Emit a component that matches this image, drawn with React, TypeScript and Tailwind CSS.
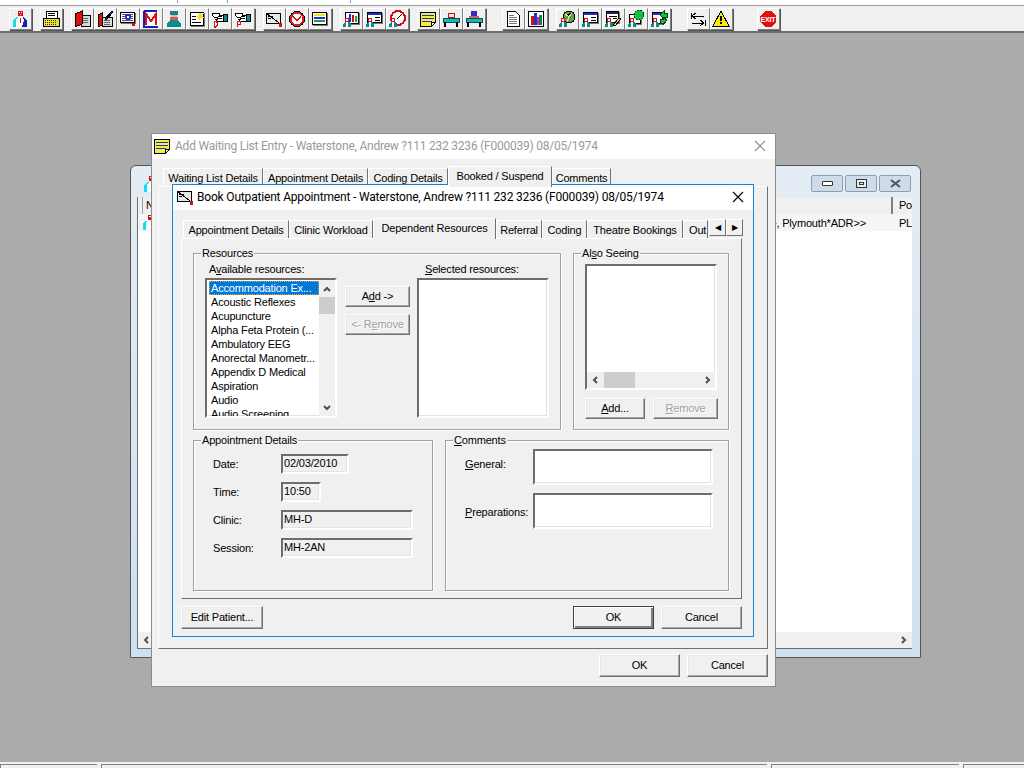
import React from "react";

const face = "font-['Liberation_Sans',Arial,sans-serif]";

// little figure that most of the patient toolbar icons share
function Mini({ x = 0, y = 0 }: { x?: number; y?: number }) {
  return (
    <g transform={`translate(${x} ${y})`}>
      <rect x="3" y="0" width="4" height="4" fill="#d81010" />
      <rect x="4" y="1" width="2" height="2" fill="#ffffff" />
      <path d="M1 9V6L3 4H7L9 6V9Z" fill="#0d8a8a" />
      <path d="M4 4H6V9H4Z" fill="#ffffff" />
    </g>
  );
}

function Sheet({ x, y, w, h }: { x: number; y: number; w: number; h: number }) {
  return (
    <>
      <rect x={x + 1} y={y + 1} width={w} height={h} fill="#777777" />
      <rect x={x + 0.5} y={y + 0.5} width={w - 1} height={h - 1} fill="#ffffff" stroke="#000000" />
    </>
  );
}

function Hand({ children }: { children: React.ReactNode }) {
  return (
    <>
      <path d="M1 3H8V5H10L12 6V11H6L4 9H6V7H3L1 5Z" fill="#fff" stroke="#000" />
      <path d="M7 6H11M7 8H11" stroke="#000" />
      <rect x="12.500" y="4.500" width="4" height="7" fill="#0d8a8a" stroke="#000" />
      {children}
    </>
  );
}

const icons: React.ReactNode[] = [
  <>
    <rect x="7" y="1" width="5" height="5" fill="#d81010" />
    <rect x="8" y="2" width="1" height="1" fill="#fff" />
    <rect x="10" y="2" width="1" height="1" fill="#fff" />
    <rect x="9" y="4" width="1" height="1" fill="#fff" />
    <path d="M5 17V10L7 7H12L15 10V17Z" fill="#ffffff" />
    <path d="M12 7L16 10V17H11L13 11Z" fill="#1020b0" />
    <path d="M2 17V10L6 7H7L5 10V17Z" fill="#10e0f0" />
    <rect x="9" y="8" width="1" height="5" fill="#d81010" />
  </>,
  <>
    <rect x="4" y="1" width="11" height="7" fill="#fff" stroke="#000" />
    <path d="M6 3H13M6 5H13" stroke="#000" />
    <rect x="1" y="8" width="16" height="8" fill="#e8e040" stroke="#000" />
    <path d="M3 10H15M3 12H15M3 14H15" stroke="#403000" strokeDasharray="1 1" />
  </>,
  <>
    <rect x="8" y="5" width="9" height="11" fill="#d8d8d8" stroke="#000" />
    <path d="M10 8H15M10 10H15M10 12H15" stroke="#666" />
    <path d="M2 4L9 1V14L2 17Z" fill="#e01010" stroke="#000" />
  </>,
  <>
    <rect x="6" y="7" width="10" height="9" fill="#d8d8d8" stroke="#000" />
    <path d="M8 10H14M8 12H14M8 14H14" stroke="#666" />
    <path d="M2 5L6 3V15L2 17Z" fill="#e01010" stroke="#000" />
    <path d="M9 9L16 1L17 2L10 10Z" fill="#2040c0" stroke="#000" />
  </>,
  <>
    <Sheet x={1} y={2} w={15} h={11} />
    <path d="M3 4H14M3 6H6M12 6H14M3 8H6M12 8H14M3 10H14" stroke="#555" />
    <circle cx="9" cy="7" r="3" fill="#2030d0" />
    <circle cx="9" cy="7" r="1" fill="#fff" />
    <path d="M13 13H16V16H13Z" fill="#d81010" />
  </>,
  <>
    <rect x="1" y="1" width="16" height="16" fill="#fff" />
    <path d="M2 1V17H16M2 1H15" fill="none" stroke="#1020c0" strokeWidth="2" />
    <path d="M4 15V4L9 11L14 4V15" fill="none" stroke="#e01010" strokeWidth="2" />
  </>,
  <>
    <rect x="5" y="1" width="8" height="4" fill="#0d8a8a" />
    <rect x="6" y="5" width="6" height="3" fill="#f0b090" />
    <rect x="5" y="7" width="8" height="3" fill="#d06060" />
    <path d="M2 17V13L6 10H12L16 13V17Z" fill="#0d8a8a" />
  </>,
  <>
    <Sheet x={2} y={2} w={14} h={14} />
    <path d="M4 6H8M4 9H8M4 12H13" stroke="#000" />
    <path d="M12 1L13 4L16 3L14 6L17 8L13 8L12 11L10 8L8 6L11 5Z" fill="#f0e020" />
  </>,
  <Hand>
    <path d="M3 11V17H4.500L6 15.500V12.500L4.500 11Z" fill="#fff" stroke="#e01010" />
  </Hand>,
  <Hand>
    <path d="M3 17V11H6V14H3" fill="none" stroke="#e01010" />
  </Hand>,
  <>
    <path d="M1 3H15V13H1Z" fill="#e8e8e8" stroke="#000" />
    <path d="M1 3L14 13M3 6H8M3 8H6" stroke="#000" />
    <path d="M14 13H17V17H14Z" fill="#d81010" />
  </>,
  <>
    <circle cx="9" cy="9" r="7.500" fill="#e02020" stroke="#000" />
    <circle cx="9" cy="9" r="5.500" fill="#fff" />
    <path d="M4 6L9 10L13 7" fill="none" stroke="#d01010" strokeWidth="1.500" />
  </>,
  <>
    <Sheet x={1} y={2} w={15} h={13} />
    <rect x="3" y="4" width="11" height="2" fill="#f0e020" />
    <rect x="3" y="7" width="11" height="2" fill="#2030d0" />
    <rect x="3" y="10" width="11" height="2" fill="#20a040" />
  </>,
  <>
    <Sheet x={3} y={2} w={14} h={12} />
    <rect x="7" y="4" width="2" height="8" fill="#2030d0" />
    <rect x="10" y="5" width="2" height="7" fill="#d01010" />
    <rect x="13" y="6" width="2" height="6" fill="#20a040" />
    <Mini x={0} y={8} />
  </>,
  <>
    <Sheet x={2} y={2} w={15} h={11} />
    <rect x="3" y="3" width="13" height="2" fill="#2030d0" />
    <path d="M10 7H15M10 10H15" stroke="#000" />
    <Mini x={0} y={8} />
  </>,
  <>
    <circle cx="10" cy="8" r="7" fill="#fff" stroke="#d01010" strokeWidth="2" />
    <path d="M9 9L14 4" stroke="#000" />
    <Mini x={0} y={8} />
  </>,
  <>
    <path d="M1.500 2.500H16.500V12.500L12.500 16.500H1.500Z" fill="#f4ec40" stroke="#000" />
    <path d="M3 5H15M3 8H15M3 11H13" stroke="#2030d0" />
    <path d="M12.500 16V12.500H16" fill="#fff" stroke="#000" />
  </>,
  <>
    <path d="M6 3H12V7H6Z" fill="none" stroke="#d01010" />
    <path d="M1 8H17V12H1Z" fill="#10b8b8" stroke="#0a5050" />
    <path d="M3 12V17M15 12V17" stroke="#000" strokeWidth="2" />
  </>,
  <>
    <rect x="6" y="1" width="6" height="5" fill="#2030d0" />
    <rect x="8" y="2" width="2" height="2" fill="#d81010" />
    <path d="M4 6H14V8H4Z" fill="#d06060" />
    <path d="M1 8H17V12H1Z" fill="#10b8b8" stroke="#0a5050" />
    <path d="M3 12V17M15 12V17" stroke="#000" strokeWidth="2" />
  </>,
  <>
    <path d="M3.500 1.500H11.500L15.500 5.500V16.500H3.500Z" fill="#fff" stroke="#000" />
    <path d="M5 5H10M5 7H13M5 9H13M5 11H13M5 13H13" stroke="#777" />
  </>,
  <>
    <rect x="1.500" y="1.500" width="15" height="15" fill="#fff" stroke="#000" />
    <rect x="4" y="6" width="3" height="9" fill="#d01010" />
    <rect x="7" y="3" width="3" height="12" fill="#2030d0" />
    <rect x="10" y="7" width="2" height="8" fill="#e020c0" />
    <rect x="12" y="5" width="3" height="10" fill="#108040" />
  </>,
  <>
    <circle cx="11" cy="7" r="6" fill="#60a050" stroke="#000" />
    <path d="M7 4L11 7L14 3M11 7L9 12" stroke="#e8e8a0" />
    <Mini x={0} y={8} />
  </>,
  <>
    <Sheet x={2} y={2} w={15} h={11} />
    <rect x="3" y="3" width="13" height="2" fill="#2030d0" />
    <path d="M10 7H15M10 10H15" stroke="#000" />
    <Mini x={0} y={8} />
  </>,
  <>
    <Sheet x={2} y={1} w={13} h={12} />
    <rect x="3" y="2" width="11" height="2" fill="#202060" />
    <path d="M5 6H13M9 8H13" stroke="#000" />
    <path d="M9 15L15 8L17 9L11 16Z" fill="#f0d020" stroke="#000" />
    <Mini x={0} y={8} />
  </>,
  <>
    <Sheet x={2} y={4} w={12} h={10} />
    <circle cx="12" cy="5" r="5" fill="#10c040" stroke="#084020" strokeDasharray="2 1" />
    <Mini x={0} y={8} />
  </>,
  <>
    <Sheet x={2} y={2} w={11} h={12} />
    <rect x="3" y="3" width="9" height="2" fill="#2030d0" />
    <path d="M10 5L14 1V3H17V7H14V9Z" fill="#10c040" stroke="#084020" />
    <path d="M17 10L13 7V9H10V13H13V15Z" fill="#10c040" stroke="#084020" />
    <Mini x={0} y={8} />
  </>,
  <>
    <path d="M2 3V9M3 6H15M3 6L7 3M3 6L7 9" fill="none" stroke="#000" />
    <path d="M16 10V16M3 13H15M15 13L11 10M15 13L11 16" fill="none" stroke="#000" />
  </>,
  <>
    <path d="M9 1L17 16H1Z" fill="#f4f000" stroke="#000" />
    <rect x="8" y="6" width="2" height="5" fill="#000" />
    <rect x="8" y="12" width="2" height="2" fill="#000" />
  </>,
  <>
    <path d="M6 1H12L17 6V12L12 17H6L1 12V6Z" fill="#e01010" />
    <text x="9" y="11.500" textAnchor="middle" fontSize="7" fontWeight="700" fill="#fff" fontFamily="Liberation Sans, sans-serif">
      EXIT
    </text>
  </>,
];

// margin before the group, number of buttons
const groups = [
  { ml: "ml-[9px]", n: 1 },
  { ml: "ml-2", n: 1 },
  { ml: "ml-2", n: 8 },
  { ml: "ml-2", n: 3 },
  { ml: "ml-2", n: 3 },
  { ml: "ml-2", n: 3 },
  { ml: "ml-4", n: 2 },
  { ml: "ml-2", n: 5 },
  { ml: "ml-4", n: 2 },
  { ml: "ml-6", n: 1 },
];

function Toolbar() {
  let at = 0;
  return (
    <div className="flex h-[28px] items-start border-t border-b-2 border-t-[#a0a0a0] border-b-[#6d6d6d] bg-[#f0f0f0] pt-[2px]">
      {groups.map((g, gi) => (
        <div key={gi} className={`flex ${g.ml}`}>
          {Array.from({ length: g.n }).map((_, i) => {
            const icon = icons[at++];
            return (
              <div
                key={i}
                className="flex h-[22px] w-[23px] items-center justify-center border border-white border-r-[#808080] border-b-[#808080] pr-px shadow-[1px_1px_0_#555]"
              >
                <svg width="18" height="18" viewBox="0 0 18 18" shapeRendering="crispEdges">
                  {icon}
                </svg>
              </div>
            );
          })}
        </div>
      ))}
    </div>
  );
}

function Btn({
  w,
  h = "h-[21px]",
  disabled,
  isDefault,
  children,
}: {
  w: string;
  h?: string;
  disabled?: boolean;
  isDefault?: boolean;
  children: React.ReactNode;
}) {
  return (
    <div
      className={`flex shrink-0 items-center justify-center border bg-[#f0f0f0] ${w} ${h} ${
        isDefault
          ? "border-[#404040] shadow-[inset_1px_1px_0_#fff,inset_-2px_-2px_0_#808080]"
          : "border-white border-r-[#707070] border-b-[#707070] shadow-[inset_-1px_-1px_0_#a8a8a8,inset_1px_1px_0_#e8e8e8]"
      } ${disabled ? "text-[#a0a0a0] [text-shadow:1px_1px_0_#fff]" : "text-black"}`}
    >
      <span>{children}</span>
    </div>
  );
}

function Sunken({ className, children }: { className: string; children?: React.ReactNode }) {
  return (
    <div
      className={`border-2 border-t-[#6d6d6d] border-l-[#6d6d6d] border-r-white border-b-white shadow-[inset_-1px_-1px_0_#e3e3e3] ${className}`}
    >
      {children}
    </div>
  );
}

function Tab({ w, active, clip, children }: { w: string; active?: boolean; clip?: boolean; children: React.ReactNode }) {
  return (
    <div
      className={`flex shrink-0 overflow-hidden whitespace-nowrap border border-white border-r-[#707070] border-b-0 bg-[#f0f0f0] ${w} ${
        active ? "z-10 -mb-px h-[21px] pt-px" : "h-[18px] pt-px"
      } ${clip ? "justify-start pl-[5px]" : "justify-center"}`}
    >
      {children}
    </div>
  );
}

function Group({
  legend,
  className,
  children,
}: {
  legend: React.ReactNode;
  className: string;
  children: React.ReactNode;
}) {
  return (
    <fieldset className={`shrink-0 border border-[#a0a0a0] shadow-[1px_1px_0_#fff,inset_1px_1px_0_#fff] ${className}`}>
      <legend className="ml-[7px] h-[14px] px-px leading-[14px]">{legend}</legend>
      {children}
    </fieldset>
  );
}

function Arrow({ d }: { d: string }) {
  return (
    <svg width="8" height="8" viewBox="0 0 8 8" fill="none" stroke="#505050" strokeWidth="2">
      <path d={d} />
    </svg>
  );
}

const resources = [
  "Accommodation Ex...",
  "Acoustic Reflexes",
  "Acupuncture",
  "Alpha Feta Protein (...",
  "Ambulatory EEG",
  "Anorectal Manometr...",
  "Appendix D Medical",
  "Aspiration",
  "Audio",
  "Audio Screening",
];

function ResourceList() {
  return (
    <Sunken className="flex h-[140px] w-[132px] overflow-hidden bg-white">
      <div className="flex-1 overflow-hidden pl-[2px] pt-px">
        {resources.map((r, i) => (
          <div
            key={r}
            className={`h-[14px] whitespace-nowrap pl-[2px] leading-[14px] ${
              i === 0 ? "bg-[#0078d7] text-white outline-1 -outline-offset-1 outline-dotted outline-[#f0a040]" : ""
            }`}
          >
            {r}
          </div>
        ))}
      </div>
      <div className="flex w-[16px] shrink-0 flex-col items-center bg-[#f0f0f0]">
        <div className="flex h-[17px] items-center">
          <Arrow d="M1 6L4 3L7 6" />
        </div>
        <div className="h-[17px] w-full bg-[#cdcdcd]" />
        <div className="flex-1" />
        <div className="flex h-[17px] items-center">
          <Arrow d="M1 2L4 5L7 2" />
        </div>
      </div>
    </Sunken>
  );
}

function BookDialog() {
  return (
    <div className="absolute left-[172px] top-[184px] flex h-[453px] w-[582px] flex-col border border-[#1883d7] bg-[#f0f0f0] text-black">
      <div className="flex h-[25px] shrink-0 items-center bg-white pb-px pl-[3px] pr-[9px]">
        <svg width="18" height="18" viewBox="0 0 18 18" shapeRendering="crispEdges">
          {icons[10]}
        </svg>
        <span className="ml-[3px] flex-1 whitespace-nowrap font-['Roboto',sans-serif] text-[12px] tracking-[-0.18px]">
          Book Outpatient Appointment - Waterstone, Andrew ?111 232 3236 (F000039) 08/05/1974
        </span>
        <svg width="12" height="12" viewBox="0 0 12 12" stroke="#000" strokeWidth="1.100">
          <path d="M1 1L11 11M11 1L1 11" />
        </svg>
      </div>

      <div className="flex flex-1 flex-col pl-2 pt-2">
        <div className="relative ml-[2px] flex h-[20px] w-[559px] shrink-0 items-end">
          <Tab w="w-[106px]">Appointment Details</Tab>
          <Tab w="w-[84px]">Clinic Workload</Tab>
          <Tab w="w-[123px]" active>
            Dependent Resources
          </Tab>
          <Tab w="w-[46px]">Referral</Tab>
          <Tab w="w-[45px]">Coding</Tab>
          <Tab w="w-[96px]">Theatre Bookings</Tab>
          <Tab w="w-[25px]" clip>
            Out
          </Tab>
          <div className="ml-px flex self-start pt-px">
            <div className="flex h-[17px] w-[17px] items-center justify-center border border-white border-r-[#707070] border-b-[#707070] text-[8px]">
              ◀
            </div>
            <div className="flex h-[17px] w-[17px] items-center justify-center border border-white border-r-[#707070] border-b-[#707070] text-[8px]">
              ▶
            </div>
          </div>
        </div>

        <div className="flex h-[361px] w-[561px] shrink-0 flex-col gap-[3px] border border-t-white border-l-white border-r-[#707070] border-b-[#707070] pl-[11px] pt-[7px]">
          <div className="flex gap-3">
            <Group className="h-[184px] w-[368px]" legend="Resources">
              <div className="flex pl-[11px] pt-[2px]">
                <div>
                  <div className="ml-1 h-[16px] leading-[14px]">
                    A<u>v</u>ailable resources:
                  </div>
                  <ResourceList />
                </div>
                <div className="ml-2 flex flex-col gap-[7px] pt-[24px]">
                  <Btn w="w-[65px]">
                    A<u>d</u>d -&gt;
                  </Btn>
                  <Btn w="w-[65px]" disabled>
                    &lt;- R<u>e</u>move
                  </Btn>
                </div>
                <div className="ml-[7px]">
                  <div className="ml-2 h-[16px] leading-[14px]">
                    <u>S</u>elected resources:
                  </div>
                  <Sunken className="h-[140px] w-[132px] bg-white" />
                </div>
              </div>
            </Group>
            <Group
              className="h-[184px] w-[156px]"
              legend={
                <>
                  Al<u>s</u>o Seeing
                </>
              }
            >
              <div className="pl-[11px] pt-[4px]">
                <Sunken className="flex h-[126px] w-[132px] flex-col bg-white">
                  <div className="flex-1" />
                  <div className="flex h-[16px] items-center bg-[#f0f0f0]">
                    <div className="flex w-[17px] justify-center">
                      <Arrow d="M5 1L2 4L5 7" />
                    </div>
                    <div className="h-full w-[31px] bg-[#cdcdcd]" />
                    <div className="flex-1" />
                    <div className="flex w-[17px] justify-center">
                      <Arrow d="M3 1L6 4L3 7" />
                    </div>
                  </div>
                </Sunken>
                <div className="mt-2 flex gap-2">
                  <Btn w="w-[60px]">
                    <u>A</u>dd...
                  </Btn>
                  <Btn w="w-[65px]" disabled>
                    <u>R</u>emove
                  </Btn>
                </div>
              </div>
            </Group>
          </div>

          <div className="flex gap-3">
            <Group className="h-[158px] w-[240px]" legend="Appointment Details">
              <div className="flex flex-col gap-2 pl-[19px] pt-[7px]">
                {[
                  ["Date:", "02/03/2010", "w-[68px]"],
                  ["Time:", "10:50", "w-[40px]"],
                  ["Clinic:", "MH-D", "w-[132px]"],
                  ["Session:", "MH-2AN", "w-[132px]"],
                ].map(([label, value, w]) => (
                  <div key={label} className="flex h-[20px] items-center">
                    <span className="w-[68px]">{label}</span>
                    <Sunken className={`h-[20px] pl-px leading-[15px] ${w}`}>{value}</Sunken>
                  </div>
                ))}
              </div>
            </Group>
            <Group
              className="h-[158px] w-[284px]"
              legend={
                <>
                  <u>C</u>omments
                </>
              }
            >
              <div className="flex flex-col gap-2 pl-[19px] pt-[2px]">
                <div className="flex">
                  <span className="mt-[7px] w-[68px]">
                    <u>G</u>eneral:
                  </span>
                  <Sunken className="h-[36px] w-[180px] bg-white" />
                </div>
                <div className="flex">
                  <span className="mt-[11px] w-[68px]">
                    <u>P</u>reparations:
                  </span>
                  <Sunken className="h-[36px] w-[180px] bg-white" />
                </div>
              </div>
            </Group>
          </div>
        </div>

        <div className="mt-[7px] flex w-[561px]">
          <Btn w="w-[82px]" h="h-[23px]">
            Edit Patient...
          </Btn>
          <div className="flex-1" />
          <Btn w="w-[81px]" h="h-[23px]" isDefault>
            OK
          </Btn>
          <div className="w-[7px]" />
          <Btn w="w-[81px]" h="h-[23px]">
            Cancel
          </Btn>
        </div>
      </div>
    </div>
  );
}

function WaitingListWindow() {
  return (
    <div className="absolute left-[151px] top-[133px] flex h-[554px] w-[625px] flex-col border border-[#8c8c8c] bg-[#f0f0f0] text-black">
      <div className="flex h-[25px] shrink-0 items-center bg-white pb-px pl-px pr-[9px]">
        <svg width="18" height="18" viewBox="0 0 18 18" shapeRendering="crispEdges">
          {icons[16]}
        </svg>
        <span className="ml-1 flex-1 whitespace-nowrap font-['Roboto',sans-serif] text-[12px] tracking-[-0.23px] text-[#9a9a9a]">
          Add Waiting List Entry - Waterstone, Andrew ?111 232 3236 (F000039) 08/05/1974
        </span>
        <svg width="12" height="12" viewBox="0 0 12 12" stroke="#8a8a8a" strokeWidth="1.100">
          <path d="M1 1L11 11M11 1L1 11" />
        </svg>
      </div>
      <div className="flex flex-1 flex-col pl-[6px] pt-[7px]">
        <div className="ml-[5px] flex h-[20px] shrink-0 items-end">
          <Tab w="w-[100px]">Waiting List Details</Tab>
          <Tab w="w-[105px]">Appointment Details</Tab>
          <Tab w="w-[80px]">Coding Details</Tab>
          <Tab w="w-[104px]" active>
            Booked / Suspend
          </Tab>
          <Tab w="w-[59px]">Comments</Tab>
        </div>
        <div className="h-[463px] w-[610px] shrink-0 border border-t-white border-l-white border-r-[#707070] border-b-[#707070]" />
        <div className="mt-[5px] flex w-[610px] justify-end gap-[7px]">
          <Btn w="w-[81px]" h="h-[23px]">
            OK
          </Btn>
          <Btn w="w-[81px]" h="h-[23px]">
            Cancel
          </Btn>
        </div>
      </div>
    </div>
  );
}

function CaptionBtn({ children }: { children: React.ReactNode }) {
  return (
    <div className="flex h-[17px] w-[32px] items-center justify-center rounded-[2px] border border-[#8a9fb5] bg-[#cfdbe8]">
      {children}
    </div>
  );
}

function ListWindow() {
  return (
    <div className="absolute left-[130px] top-[165px] flex h-[493px] w-[791px] flex-col rounded-t-[6px] border border-[#555] bg-gradient-to-b from-[#e4edf5] to-[#cfe0f0] text-black">
      <div className="flex h-[31px] shrink-0 items-start pl-[10px] pr-[9px] pt-[9px]">
        <svg width="20" height="18" viewBox="0 0 18 18" shapeRendering="crispEdges">
          {icons[0]}
        </svg>
        <div className="flex-1" />
        <div className="flex gap-[2px]">
          <CaptionBtn>
            <div className="h-[5px] w-[11px] rounded-[1px] border border-[#333] bg-white" />
          </CaptionBtn>
          <CaptionBtn>
            <div className="flex h-[9px] w-[11px] items-center justify-center border border-[#333] bg-[#e8eef4]">
              <div className="h-[3px] w-[5px] border border-[#333]" />
            </div>
          </CaptionBtn>
          <CaptionBtn>
            <svg width="11" height="9" viewBox="0 0 11 9" stroke="#555" strokeWidth="2">
              <path d="M1 1L10 8M10 1L1 8" />
            </svg>
          </CaptionBtn>
        </div>
      </div>
      <div className="ml-[6px] flex h-[452px] w-[775px] shrink-0 flex-col border-l border-b border-[#707070] bg-white">
        <div className="flex h-[17px] shrink-0 bg-[#f0f0f0]">
          <div className="ml-[4px] w-[750px] border-l border-[#a0a0a0] pl-[3px] leading-[17px]">N</div>
          <div className="border-l-2 border-[#808080] pl-[6px] leading-[17px]">Po</div>
        </div>
        <div className="flex h-[17px] shrink-0 bg-[#f5f5f5] leading-[18px]">
          <svg className="ml-[3px] shrink-0" width="17" height="17" viewBox="0 0 18 18" shapeRendering="crispEdges">
            {icons[0]}
          </svg>
          <div className="w-[729px] pr-[20px] text-right">e, Plymouth*ADR&gt;&gt;</div>
          <div className="pl-[13px]">PL</div>
        </div>
        <div className="flex-1" />
        <div className="flex h-[16px] shrink-0 items-center justify-between bg-[#f0f0f0] pl-[5px] pr-[5px]">
          <Arrow d="M5 1L2 4L5 7" />
          <Arrow d="M3 1L6 4L3 7" />
        </div>
      </div>
    </div>
  );
}

export default function App() {
  return (
    <div className={`relative flex h-[768px] w-[1024px] flex-col overflow-hidden bg-[#ababab] text-[11px] tracking-[-0.18px] ${face}`}>
      <div className="relative h-[5px] shrink-0 bg-white">
        <span className="absolute left-[177px] top-0 h-[3px] w-px bg-[#7aa0e0]" />
        <span className="absolute left-[227px] top-0 h-[3px] w-px bg-[#7aa0e0]" />
        <span className="absolute left-[350px] top-0 h-[3px] w-px bg-[#7aa0e0]" />
      </div>
      <Toolbar />
      <div className="flex-1" />
      <div className="flex h-[6px] shrink-0 gap-1 bg-[#f0f0f0] pt-[2px]">
        <div className="w-[97px] border-t border-l border-[#808080]" />
        <div className="w-[666px] border-t border-l border-[#808080]" />
        <div className="w-[188px] border-t border-l border-[#808080]" />
        <div className="flex-1 border-t border-l border-[#808080]" />
      </div>

      <ListWindow />
      <WaitingListWindow />
      <BookDialog />
    </div>
  );
}
